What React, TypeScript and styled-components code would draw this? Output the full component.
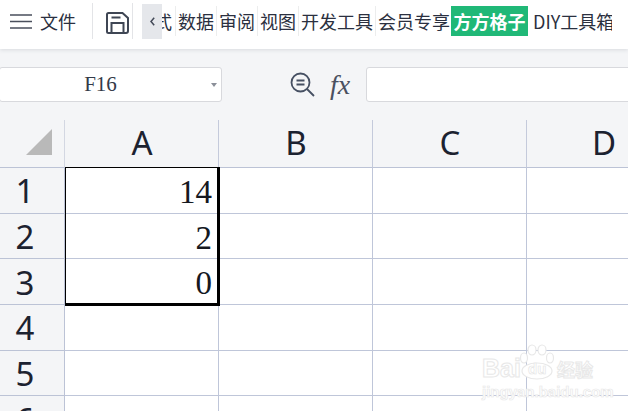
import React from "react"
import styled, { createGlobalStyle } from "styled-components"

const GlobalStyle = createGlobalStyle`
  html, body {
    margin: 0;
    padding: 0;
    background: #fff;
    overflow: hidden;
  }
  #root {
    width: 628px;
    height: 411px;
    overflow: hidden;
  }
`

const columns = ["A", "B", "C", "D"]
const rows = [1, 2, 3, 4, 5, 6]
const values: Record<number, string> = { 1: "14", 2: "2", 3: "0" }
const tabs = ["数据", "审阅", "视图", "开发工具", "会员专享"]

const MenuIcon = () => (
  <svg width="22" height="15" viewBox="0 0 22 15" fill="none" stroke="#4a4f5c" strokeWidth="1.4">
    <path d="M0 1h22M0 7.500h22M0 14h22" />
  </svg>
)

const SaveIcon = () => (
  <svg width="23" height="22" viewBox="0 0 23 22" fill="none" stroke="#3f4654" strokeWidth="2">
    <path d="M2.500 1h14l5.500 5v13a2 2 0 0 1-2 2H2.500A1.500 1.500 0 0 1 1 19.500v-17A1.500 1.500 0 0 1 2.500 1z" />
    <path d="M5.500 5.500h9M5.500 21V11h12v10" />
  </svg>
)

const ChevronIcon = () => (
  <svg width="5" height="9" viewBox="0 0 5 9" fill="none" stroke="#444a58" strokeWidth="1.500">
    <path d="M4.200.8L1 4.500l3.200 3.700" />
  </svg>
)

const ZoomIcon = () => (
  <svg width="25" height="25" viewBox="0 0 25 25" fill="none" stroke="#465063" strokeWidth="1.800">
    <circle cx="10.500" cy="10.500" r="9" />
    <path d="M6.500 8.500h8M6.500 12.500h8M17 17l7 7" />
  </svg>
)

const CornerMark = () => (
  <svg width="26" height="26" viewBox="0 0 26 26">
    <path d="M26 0v26H0z" fill="#b9b9b9" />
  </svg>
)

const PawMark = () => (
  <svg width="36" height="36" viewBox="0 0 36 36" fill="#fff" stroke="#e8e8e8" strokeWidth="1.200">
    <ellipse cx="18" cy="27" rx="15" ry="8" />
    <ellipse cx="5" cy="14" rx="3.500" ry="5" />
    <ellipse cx="13" cy="6" rx="4" ry="5" />
    <ellipse cx="23" cy="6" rx="4" ry="5" />
    <ellipse cx="31" cy="14" rx="3.500" ry="5" />
  </svg>
)

const App = () => (
  <Page>
    <GlobalStyle />
    <Toolbar>
      <MenuButton>
        <MenuIcon />
        <MenuLabel>文件</MenuLabel>
      </MenuButton>
      <ToolDivider />
      <SaveButton>
        <SaveIcon />
      </SaveButton>
      <ToolDivider />
      <ScrollButton>
        <ChevronIcon />
      </ScrollButton>
      <TabStrip>
        <ClippedTab>
          <ClippedGlyph>式</ClippedGlyph>
        </ClippedTab>
        {tabs.map((tab) => (
          <Tab key={tab}>{tab}</Tab>
        ))}
        <AccentTab>方方格子</AccentTab>
        <PlainTab>DIY工具箱</PlainTab>
      </TabStrip>
    </Toolbar>

    <FormulaBar>
      <NameBox>
        <NameText>F16</NameText>
        <NameArrow />
      </NameBox>
      <FormulaTools>
        <ZoomIcon />
        <FxLabel>fx</FxLabel>
      </FormulaTools>
      <FormulaInput />
    </FormulaBar>

    <Sheet>
      <CornerCell>
        <CornerMark />
      </CornerCell>
      {columns.map((column) => (
        <ColumnHead key={column}>{column}</ColumnHead>
      ))}
      {rows.map((row) => (
        <React.Fragment key={row}>
          <RowHead>{row}</RowHead>
          {columns.map((column) => (
            <Cell key={column}>{column === "A" ? values[row] : null}</Cell>
          ))}
        </React.Fragment>
      ))}
      <Selection />
    </Sheet>

    <Watermark>
      <LogoLine>
        <LogoBai>Bai</LogoBai>
        <PawHolder>
          <PawMark />
          <PawText>du</PawText>
        </PawHolder>
        <LogoCn>经验</LogoCn>
      </LogoLine>
      <LogoUrl>jingyan.baidu.com</LogoUrl>
    </Watermark>
  </Page>
)

const Page = styled.div`
  position: relative;
  width: 628px;
  height: 411px;
  overflow: hidden;
  background: #f4f5f7;
  font-family: "Noto Sans", "Noto Sans CJK SC", sans-serif;
`

const Toolbar = styled.header`
  position: relative;
  z-index: 1;
  display: flex;
  align-items: flex-start;
  height: 49px;
  padding: 3px 0 0 10px;
  box-sizing: border-box;
  background: #fff;
  box-shadow: 0 1px 4px rgba(60, 64, 80, 0.14);
  color: #2b3040;
`

const MenuButton = styled.div`
  display: flex;
  align-items: center;
  gap: 8px;
  width: 82px;
  height: 36px;
`

const MenuLabel = styled.span`
  font-family: "Noto Sans CJK SC", sans-serif;
  font-size: 18px;
  line-height: 36px;
`

const ToolDivider = styled.div`
  width: 1px;
  height: 36px;
  background: #e3e4e7;
`

const SaveButton = styled.div`
  display: flex;
  align-items: center;
  justify-content: center;
  width: 39px;
  height: 36px;
  padding: 4px 0 0 9px;
  box-sizing: border-box;
`

const ScrollButton = styled.div`
  display: flex;
  align-items: center;
  justify-content: center;
  width: 20px;
  height: 35px;
  margin: 1px 0 0 9px;
  background: #e5e7eb;
`

const TabStrip = styled.nav`
  display: flex;
  align-items: flex-start;
  width: 450px;
  height: 36px;
  overflow: hidden;
  font-family: "Noto Sans CJK SC", sans-serif;
  font-size: 18px;
  white-space: nowrap;
`

const Tab = styled.div`
  flex: none;
  height: 30px;
  margin-top: 3px;
  padding: 0 2px;
  border-right: 1px solid #eceded;
  line-height: 30px;
`

const ClippedTab = styled(Tab)`
  width: 13px;
  padding: 0;
  overflow: hidden;
`

const ClippedGlyph = styled.span`
  display: block;
  margin-left: -8px;
`

const AccentTab = styled.div`
  flex: none;
  width: 77px;
  height: 30px;
  margin: 3px 0 0 -2px;
  background: #20b877;
  color: #fff;
  font-weight: 700;
  line-height: 30px;
  text-align: center;
`

const PlainTab = styled.div`
  flex: none;
  height: 30px;
  margin-top: 3px;
  padding-left: 5px;
  line-height: 30px;
`

const FormulaBar = styled.div`
  display: flex;
  align-items: center;
  height: 71px;
`

const NameBox = styled.div`
  display: flex;
  align-items: center;
  width: 223px;
  height: 35px;
  margin-left: -1px;
  box-sizing: border-box;
  background: #fff;
  border: 1px solid #d8d9dd;
  border-radius: 3px;
`

const NameText = styled.span`
  flex: 1;
  padding-right: 2px;
  font-family: "Liberation Serif", serif;
  font-size: 21px;
  color: #333a48;
  text-align: center;
`

const NameArrow = styled.i`
  width: 0;
  height: 0;
  margin: 0 4px 0 8px;
  border-left: 3.5px solid transparent;
  border-right: 3.5px solid transparent;
  border-top: 4px solid #8b8f99;
`

const FormulaTools = styled.div`
  display: flex;
  align-items: center;
  width: 144px;
  padding-left: 68px;
  box-sizing: border-box;
  gap: 15px;
`

const FxLabel = styled.span`
  font-family: "Liberation Serif", serif;
  font-size: 28px;
  font-style: italic;
  line-height: 30px;
  color: #4a5060;
`

const FormulaInput = styled.div`
  flex: 1;
  height: 35px;
  margin-right: -4px;
  box-sizing: border-box;
  background: #fff;
  border: 1px solid #d8d9dd;
  border-radius: 3px;
`

const Sheet = styled.section`
  position: relative;
  display: grid;
  grid-template-columns: 65px repeat(4, 154px);
  grid-template-rows: 48px;
  grid-auto-rows: 45.7px;
  color: #1c2230;
`

const CornerCell = styled.div`
  display: flex;
  justify-content: flex-end;
  align-items: flex-start;
  padding: 9px 12px 0 0;
  box-sizing: border-box;
  border-right: 1px solid #d3d7e2;
  border-bottom: 1px solid #bcc3d6;
`

const ColumnHead = styled.div`
  display: flex;
  align-items: center;
  justify-content: center;
  padding: 0 0 2px 1px;
  box-sizing: border-box;
  border-right: 1px solid #c4cadb;
  border-bottom: 1px solid #bcc3d6;
  font-size: 33px;
  line-height: 44px;
`

const RowHead = styled.div`
  display: flex;
  align-items: center;
  justify-content: center;
  padding: 2px 14px 0 0;
  box-sizing: border-box;
  border-right: 1px solid #bcc3d6;
  border-bottom: 1px solid #bcc3d6;
  font-size: 33px;
  line-height: 44px;
`

const Cell = styled.div`
  box-sizing: border-box;
  padding: 2px 6px 0 0;
  background: #fff;
  border-right: 1px solid #bfc6d9;
  border-bottom: 1px solid #bfc6d9;
  font-family: "Liberation Serif", serif;
  font-size: 33px;
  line-height: 44px;
  text-align: right;
  color: #15181f;
`

const Selection = styled.div`
  position: absolute;
  left: 65px;
  top: 47px;
  width: 155px;
  height: 139px;
  box-sizing: border-box;
  border: solid #000;
  border-width: 1px 3px 3px 1px;
`

const Watermark = styled.div`
  position: absolute;
  left: 482px;
  top: 342px;
  width: 116px;
  color: #fff;
  -webkit-text-stroke: 1px #e8e8e8;
`

const LogoLine = styled.div`
  display: flex;
  align-items: flex-end;
  height: 38px;
`

const LogoBai = styled.span`
  width: 37px;
  font-family: "Liberation Sans", sans-serif;
  font-size: 25px;
  font-weight: 700;
  line-height: 24px;
`

const PawHolder = styled.div`
  position: relative;
  width: 36px;
  height: 36px;
`

const PawText = styled.span`
  position: absolute;
  left: 9px;
  top: 16px;
  font-family: "Liberation Sans", sans-serif;
  font-size: 15px;
  font-weight: 700;
  line-height: 18px;
  -webkit-text-stroke: 0.6px #e4e4e4;
`

const LogoCn = styled.span`
  margin-left: 2px;
  font-family: "Noto Sans CJK SC", sans-serif;
  font-size: 18px;
  font-weight: 700;
  line-height: 22px;
`

const LogoUrl = styled.div`
  margin-top: 4px;
  font-family: "Liberation Sans", sans-serif;
  font-size: 15px;
  font-weight: 700;
  line-height: 15px;
  white-space: nowrap;
  -webkit-text-stroke: 0.7px #e8e8e8;
`

export default App
